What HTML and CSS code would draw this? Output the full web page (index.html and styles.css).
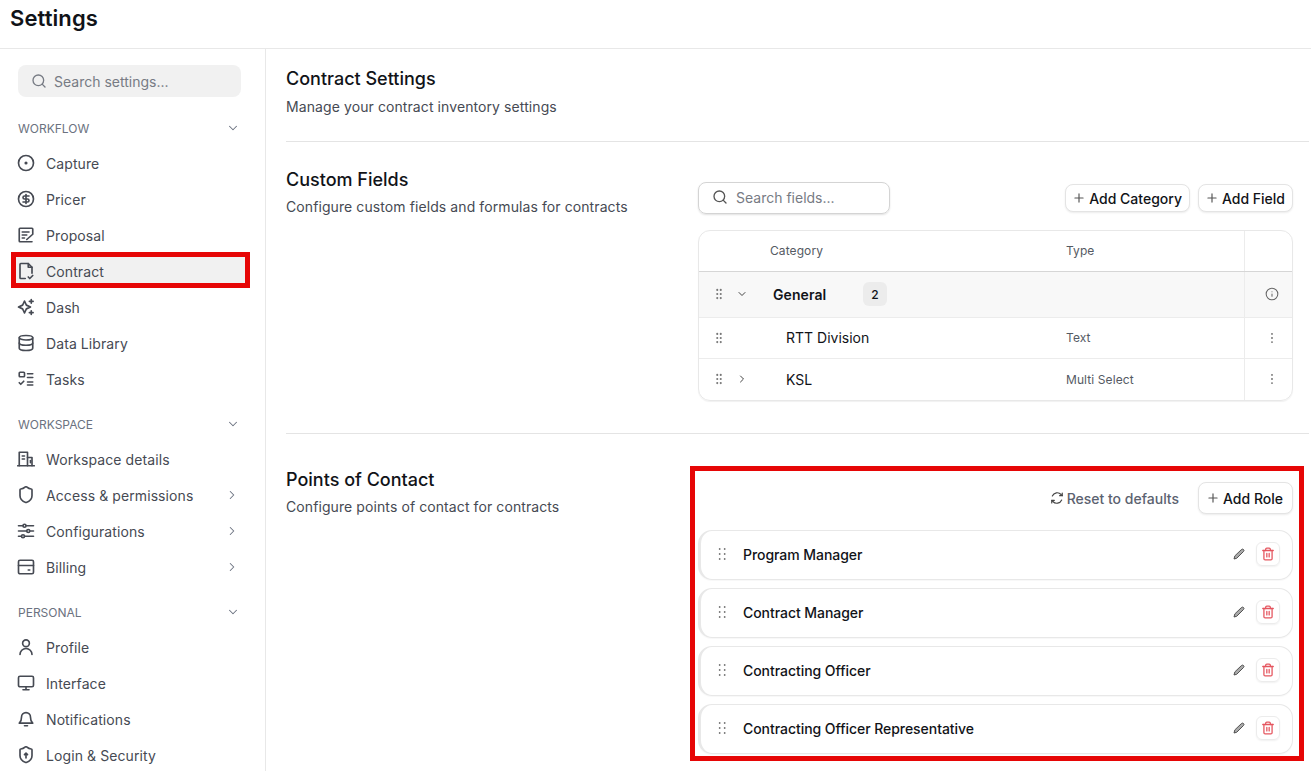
FILE: index.html
```html
<!DOCTYPE html>
<html lang="en">
<head>
  <meta charset="UTF-8">
  <meta name="viewport" content="width=device-width, initial-scale=1.0">
  <title>Settings</title>
  <link rel="stylesheet" href="styles.css">
</head>
<body>
  <svg class="sprite" aria-hidden="true">
    <symbol id="i-search" viewBox="0 0 24 24"><circle cx="11" cy="11" r="8"/><path d="m21 21-4.3-4.3"/></symbol>
    <symbol id="i-down" viewBox="0 0 24 24"><path d="m6 9 6 6 6-6"/></symbol>
    <symbol id="i-right" viewBox="0 0 24 24"><path d="m9 6 6 6-6 6"/></symbol>
    <symbol id="i-plus" viewBox="0 0 24 24"><path d="M5 12h14M12 5v14"/></symbol>
    <symbol id="i-grip" viewBox="0 0 24 24"><circle cx="9" cy="5" r=".8"/><circle cx="15" cy="5" r=".8"/><circle cx="9" cy="12" r=".8"/><circle cx="15" cy="12" r=".8"/><circle cx="9" cy="19" r=".8"/><circle cx="15" cy="19" r=".8"/></symbol>
    <symbol id="i-grip-wide" viewBox="0 0 16 16"><circle cx="5.500" cy="3" r=".4"/><circle cx="10.500" cy="3" r=".4"/><circle cx="5.500" cy="8" r=".4"/><circle cx="10.500" cy="8" r=".4"/><circle cx="5.500" cy="13" r=".4"/><circle cx="10.500" cy="13" r=".4"/></symbol>
    <symbol id="i-dots" viewBox="0 0 24 24"><circle cx="12" cy="5" r=".6"/><circle cx="12" cy="12" r=".6"/><circle cx="12" cy="19" r=".6"/></symbol>
    <symbol id="i-pencil" viewBox="0 0 24 24"><path d="M17 3a2.800 2.800 0 0 1 4 4L7.500 20.500 2 22l1.500-5.500z"/></symbol>
    <symbol id="i-trash" viewBox="0 0 24 24"><path d="M3 6h18"/><path d="M19 6v14a2 2 0 0 1-2 2H7a2 2 0 0 1-2-2V6"/><path d="M8 6V4a2 2 0 0 1 2-2h4a2 2 0 0 1 2 2v2"/><path d="M10 11v6M14 11v6"/></symbol>
  </svg>

  <header class="topbar"><h1>Settings</h1></header>

  <div class="layout">
    <aside class="sidebar">
      <div class="side-search">
        <svg class="icon-16"><use href="#i-search"/></svg>
        <span>Search settings...</span>
      </div>

      <div class="nav-head"><span>WORKFLOW</span><svg class="chev"><use href="#i-down"/></svg></div>
      <a class="nav-item"><svg class="nav-icon" viewBox="0 0 24 24"><circle cx="12" cy="12" r="10"/><circle cx="12" cy="12" r="1"/></svg>Capture</a>
      <a class="nav-item"><svg class="nav-icon" viewBox="0 0 24 24"><circle cx="12" cy="12" r="10"/><path d="M16 8h-6a2 2 0 1 0 0 4h4a2 2 0 1 1 0 4H8"/><path d="M12 18V6"/></svg>Pricer</a>
      <a class="nav-item"><svg class="nav-icon" viewBox="0 0 24 24"><path d="M21 10V4a1 1 0 0 0-1-1H4a1 1 0 0 0-1 1v16a1 1 0 0 0 1 1h16"/><path d="M7 8h9M7 12h6M7 16h3"/><path d="m13 18 8-7"/></svg>Proposal</a>
      <a class="nav-item active"><svg class="nav-icon" viewBox="0 0 24 24"><path d="M11 22H5a1 1 0 0 1-1-1V3a1 1 0 0 1 1-1h10l5 5v8"/><path d="M15 2v5h5"/><path d="m15 20 2 2 4-4"/></svg>Contract<span class="mark mark-nav"></span></a>
      <a class="nav-item"><svg class="nav-icon" viewBox="0 0 24 24"><path d="M10 6.500 12.500 12 18 14.500 12.500 17 10 22.500 7.500 17 2 14.500 7.500 12z" transform="translate(0 -2.500)"/><path d="M19 2v5M16.500 4.500h5M19 17v5M16.500 19.500h5"/></svg>Dash</a>
      <a class="nav-item"><svg class="nav-icon" viewBox="0 0 24 24"><ellipse cx="12" cy="5" rx="9" ry="3"/><path d="M3 5v14a9 3 0 0 0 18 0V5"/><path d="M3 12a9 3 0 0 0 18 0"/></svg>Data Library</a>
      <a class="nav-item"><svg class="nav-icon" viewBox="0 0 24 24"><rect x="3" y="3" width="7" height="6" rx="1"/><path d="m3 17 2 2 4-4"/><path d="M14 5h7M14 10h7M14 16h7M14 20h7"/></svg>Tasks</a>

      <div class="nav-head"><span>WORKSPACE</span><svg class="chev"><use href="#i-down"/></svg></div>
      <a class="nav-item"><svg class="nav-icon" viewBox="0 0 24 24"><path d="M1 21h22"/><path d="M3 21V3h11v18"/><path d="M14 10h6v11"/><path d="M7 8h3M7 12h3"/><path d="M18 14v3"/></svg>Workspace details</a>
      <a class="nav-item"><svg class="nav-icon" viewBox="0 0 24 24"><path d="M20 13c0 5-3.500 7.500-7.700 9a1 1 0 0 1-.6 0C7.500 20.500 4 18 4 13V5a1 1 0 0 1 1-1c2 0 4.500-1.200 6.200-2.700a1.200 1.200 0 0 1 1.600 0C14.500 2.800 17 4 19 4a1 1 0 0 1 1 1z"/></svg>Access &amp; permissions<svg class="chev end"><use href="#i-right"/></svg></a>
      <a class="nav-item"><svg class="nav-icon" viewBox="0 0 24 24"><path d="M2 5h6M12 5h10M2 12h11M17 12h5M2 19h4M10 19h12"/><circle cx="10" cy="5" r="2"/><circle cx="15" cy="12" r="2"/><circle cx="8" cy="19" r="2"/></svg>Configurations<svg class="chev end"><use href="#i-right"/></svg></a>
      <a class="nav-item"><svg class="nav-icon" viewBox="0 0 24 24"><rect x="2" y="3" width="20" height="18" rx="2"/><path d="M2 10h20"/><path d="M15 16h2"/></svg>Billing<svg class="chev end"><use href="#i-right"/></svg></a>

      <div class="nav-head"><span>PERSONAL</span><svg class="chev"><use href="#i-down"/></svg></div>
      <a class="nav-item"><svg class="nav-icon" viewBox="0 0 24 24"><circle cx="12" cy="7" r="4.500"/><path d="M4 22a8 8 0 0 1 16 0"/></svg>Profile</a>
      <a class="nav-item"><svg class="nav-icon" viewBox="0 0 24 24"><rect x="2" y="3" width="20" height="14" rx="2"/><path d="M8 21h8M12 17v4"/></svg>Interface</a>
      <a class="nav-item"><svg class="nav-icon" viewBox="0 0 24 24"><path d="M10 21h4"/><path d="M3 17.500c1.500-1.500 3-2.500 3-8a6 6 0 0 1 12 0c0 5.500 1.500 6.500 3 8z"/></svg>Notifications</a>
      <a class="nav-item"><svg class="nav-icon" viewBox="0 0 24 24"><path d="M20 13c0 5-3.500 7.500-7.700 9a1 1 0 0 1-.6 0C7.500 20.500 4 18 4 13V5a1 1 0 0 1 1-1c2 0 4.500-1.200 6.200-2.700a1.200 1.200 0 0 1 1.600 0C14.500 2.800 17 4 19 4a1 1 0 0 1 1 1z"/><path d="M12 16v-6M10 11.500l2-2 2 2"/></svg>Login &amp; Security</a>
    </aside>

    <main class="content">
      <section class="intro">
        <h2>Contract Settings</h2>
        <p>Manage your contract inventory settings</p>
      </section>

      <section class="block block-fields">
        <div class="block-text">
          <h2>Custom Fields</h2>
          <p>Configure custom fields and formulas for contracts</p>
        </div>
        <div class="block-body">
          <div class="toolbar">
            <div class="field-search">
              <svg class="icon-16"><use href="#i-search"/></svg>
              <span>Search fields...</span>
            </div>
            <div class="toolbar-actions">
              <button class="btn"><svg class="icon-14"><use href="#i-plus"/></svg>Add Category</button>
              <button class="btn"><svg class="icon-14"><use href="#i-plus"/></svg>Add Field</button>
            </div>
          </div>

          <div class="table">
            <div class="tr th">
              <div class="td-handle"></div>
              <div class="td-name">Category</div>
              <div class="td-type">Type</div>
              <div class="td-end"></div>
            </div>
            <div class="tr group">
              <div class="td-handle"><svg class="grip"><use href="#i-grip"/></svg><svg class="tiny"><use href="#i-down"/></svg></div>
              <div class="td-name"><b>General</b><span class="count">2</span></div>
              <div class="td-type"></div>
              <div class="td-end"><svg class="icon-14" viewBox="0 0 24 24"><circle cx="12" cy="12" r="10"/><path d="M12 16v-4M12 8h.01"/></svg></div>
            </div>
            <div class="tr field">
              <div class="td-handle"><svg class="grip"><use href="#i-grip"/></svg></div>
              <div class="td-name indent">RTT Division</div>
              <div class="td-type">Text</div>
              <div class="td-end"><svg class="dots"><use href="#i-dots"/></svg></div>
            </div>
            <div class="tr field">
              <div class="td-handle"><svg class="grip"><use href="#i-grip"/></svg><svg class="tiny"><use href="#i-right"/></svg></div>
              <div class="td-name indent">KSL</div>
              <div class="td-type">Multi Select</div>
              <div class="td-end"><svg class="dots"><use href="#i-dots"/></svg></div>
            </div>
          </div>
        </div>
      </section>

      <section class="block block-contacts">
        <div class="block-text">
          <h2>Points of Contact</h2>
          <p>Configure points of contact for contracts</p>
        </div>
        <div class="block-body contacts">
          <span class="mark mark-panel"></span>
          <div class="contacts-actions">
            <a class="reset"><svg class="icon-14" viewBox="0 0 24 24"><path d="M4 8.500A9 9 0 0 1 19 6l2 2"/><path d="M21 3.500V8h-4.500"/><path d="M20 15.500A9 9 0 0 1 5 18l-2-2"/><path d="M3 20.500V16h4.500"/></svg>Reset to defaults</a>
            <button class="btn btn-role"><svg class="icon-14"><use href="#i-plus"/></svg>Add Role</button>
          </div>
          <div class="role"><svg class="grip-wide"><use href="#i-grip-wide"/></svg><span class="role-name">Program Manager</span><svg class="pencil"><use href="#i-pencil"/></svg><span class="trash"><svg><use href="#i-trash"/></svg></span></div>
          <div class="role"><svg class="grip-wide"><use href="#i-grip-wide"/></svg><span class="role-name">Contract Manager</span><svg class="pencil"><use href="#i-pencil"/></svg><span class="trash"><svg><use href="#i-trash"/></svg></span></div>
          <div class="role"><svg class="grip-wide"><use href="#i-grip-wide"/></svg><span class="role-name">Contracting Officer</span><svg class="pencil"><use href="#i-pencil"/></svg><span class="trash"><svg><use href="#i-trash"/></svg></span></div>
          <div class="role"><svg class="grip-wide"><use href="#i-grip-wide"/></svg><span class="role-name">Contracting Officer Representative</span><svg class="pencil"><use href="#i-pencil"/></svg><span class="trash"><svg><use href="#i-trash"/></svg></span></div>
        </div>
      </section>
    </main>
  </div>
</body>
</html>
```

FILE: styles.css
```css
* {
  box-sizing: border-box;
}

html,
body {
  height: 100%;
}

body {
  margin: 0;
  font-family: Inter, "Noto Sans", sans-serif;
  font-size: 14px;
  letter-spacing: 0.09px;
  color: #111318;
  background: #fff;
  overflow: hidden;
}

.sprite {
  display: none;
}

svg {
  fill: none;
  stroke: currentColor;
  stroke-width: 2;
  stroke-linecap: round;
  stroke-linejoin: round;
  flex-shrink: 0;
}

h1,
h2,
p {
  margin: 0;
}

.icon-16 {
  width: 16px;
  height: 16px;
}

.icon-14 {
  width: 14px;
  height: 14px;
}

.topbar {
  height: 49px;
  padding: 5px 10px 0;
  border-bottom: 1px solid #e8e8e8;
}

.topbar h1 {
  font-size: 22px;
  line-height: 27px;
  font-weight: 600;
}

.layout {
  display: flex;
  height: 722px;
}

/* sidebar */
.sidebar {
  width: 266px;
  flex-shrink: 0;
  padding: 16px 16px 0 16px;
  border-right: 1px solid #e8e8e8;
  color: #464a53;
}

.side-search {
  display: flex;
  align-items: center;
  gap: 7px;
  height: 32px;
  margin: 0 8px 0 2px;
  padding: 0 13px;
  border-radius: 8px;
  background: #f1f1f1;
  color: #777b84;
  letter-spacing: 0;
}

.nav-head {
  display: flex;
  justify-content: space-between;
  align-items: center;
  height: 16px;
  margin: 23px 8px 9px 2px;
  font-size: 12px;
  letter-spacing: 0;
  color: #6b7280;
}

.nav-item ~ .nav-head {
  margin-top: 19px;
}

.chev {
  width: 14px;
  height: 14px;
  margin: -1px 1px 0 0;
  color: #6b7280;
  stroke-width: 1.800;
}

.chev.end {
  margin: 0 1px 0 auto;
}

.nav-item {
  position: relative;
  isolation: isolate;
  display: flex;
  align-items: center;
  gap: 11px;
  width: 229px;
  height: 36px;
  padding-left: 1px;
  padding-right: 5px;
}

.nav-item.active::before {
  content: "";
  position: absolute;
  z-index: -1;
  left: 0;
  right: 0;
  top: 4px;
  bottom: 6px;
  background: #f1f1f1;
}

.nav-icon {
  width: 18px;
  height: 18px;
  stroke-width: 2.200;
}

/* red annotation frames drawn over the page */
.mark {
  position: absolute;
  border: 5px solid #e60606;
  pointer-events: none;
}

.mark-nav {
  left: -5px;
  right: -5px;
  top: -1px;
  bottom: 1px;
}

.mark-panel {
  left: -8px;
  right: -11px;
  top: -2px;
  bottom: 1px;
}

/* main column */
.content {
  flex: 1;
  padding: 0 2px 0 20px;
}

.content h2 {
  font-size: 18px;
  line-height: 24px;
  font-weight: 500;
  letter-spacing: 0;
}

.content p {
  margin-top: 3px;
  line-height: 24px;
  color: #464a53;
}

.intro {
  height: 93px;
  padding-top: 18px;
  border-bottom: 1px solid #e4e4e4;
}

.intro p {
  margin-top: 4px;
}

.block {
  display: grid;
  grid-template-columns: 388px 1fr;
  column-gap: 24px;
  padding-right: 16px;
}

.block-fields {
  height: 292px;
  padding-top: 26px;
  border-bottom: 1px solid #e4e4e4;
}

.block-contacts {
  padding-top: 34px;
}

.toolbar {
  display: flex;
  justify-content: space-between;
  align-items: center;
  margin-top: 14px;
  height: 32px;
}

.field-search {
  display: flex;
  align-items: center;
  gap: 8px;
  width: 192px;
  height: 32px;
  padding: 0 13px 2px;
  border: 1px solid #d4d4d4;
  border-radius: 8px;
  box-shadow: 0 1px 2px rgba(0, 0, 0, 0.12);
  color: #777b84;
  letter-spacing: 0;
}

.field-search svg {
  color: #555;
}

.toolbar-actions {
  display: flex;
  gap: 8px;
}

.btn {
  display: flex;
  align-items: center;
  gap: 3px;
  height: 28px;
  padding: 0 7px 0 6px;
  border: 1px solid #e4e4e4;
  border-radius: 8px;
  background: #fff;
  box-shadow: 0 1px 2px rgba(0, 0, 0, 0.08);
  font: 500 14px Inter, sans-serif;
  color: #111318;
}

.btn svg {
  color: #555;
}

.table {
  margin-top: 16px;
  border: 1px solid #e8e8e8;
  border-radius: 12px;
  box-shadow: 0 1px 1px rgba(0, 0, 0, 0.06);
  overflow: hidden;
}

.tr {
  display: grid;
  grid-template-columns: 63px 1fr 179px 48px;
  align-items: stretch;
  border-bottom: 1px solid #ececec;
}

.tr:last-child {
  border-bottom: none;
}

.tr > div {
  display: flex;
  align-items: center;
  padding-bottom: 1px;
}

.th {
  height: 41px;
  border-bottom: 1px solid #d6d6d6;
  font-size: 12px;
  color: #555a63;
}

.th > div {
  padding-bottom: 2px;
}

.th .td-name {
  padding-left: 8px;
}

.group {
  height: 46px;
  background: #f8f8f8;
}

.field {
  height: 41px;
}

.td-handle {
  padding-left: 13px;
  gap: 10px;
  color: #777;
}

.td-name b {
  width: 101px;
  padding-left: 11px;
  font-weight: 600;
}

.td-name.indent {
  padding-left: 24px;
  letter-spacing: 0;
}

.td-type {
  padding-left: 1px;
  font-size: 12px;
  color: #555a63;
}

.td-end {
  justify-content: center;
  padding-left: 6px;
  border-left: 1px solid #ececec;
  color: #666;
}

.td-end .icon-14 {
  stroke-width: 1.800;
}

.count {
  display: flex;
  align-items: center;
  justify-content: center;
  width: 24px;
  height: 24px;
  border-radius: 6px;
  background: #ececec;
  font-size: 12px;
  font-weight: 500;
}

.grip {
  width: 14px;
  height: 14px;
  color: #777;
}

.grip-wide {
  width: 16px;
  height: 16px;
  color: #666;
  stroke-width: 1;
}

.tiny {
  width: 12px;
  height: 12px;
  color: #444;
  stroke-width: 2;
}

.dots {
  width: 14px;
  height: 14px;
}

/* points of contact */
.contacts {
  position: relative;
}

.contacts-actions {
  display: flex;
  justify-content: flex-end;
  align-items: center;
  gap: 19px;
  height: 32px;
  margin-top: 14px;
  margin-bottom: 16px;
}

.reset {
  display: flex;
  align-items: center;
  gap: 3px;
  color: #5b6270;
  font-weight: 500;
  letter-spacing: 0;
}

.reset svg {
  color: #444;
}

.btn-role {
  height: 32px;
  padding: 0 9px 0 7px;
}

.role {
  display: flex;
  align-items: center;
  height: 50px;
  margin: 0 0 8px 0;
  padding: 0 12px 2px 13px;
  border: 1px solid #e8e8e8;
  border-left-width: 3px;
  border-radius: 14px;
  box-shadow: 0 1px 1px rgba(0, 0, 0, 0.03);
}

.role-name {
  flex: 1;
  margin-left: 13px;
  font-weight: 500;
  letter-spacing: -0.05px;
}

.pencil {
  width: 12px;
  height: 12px;
  margin-right: 1px;
  color: #444;
  fill: #aaa;
  stroke-width: 1.800;
}

.trash {
  display: flex;
  align-items: center;
  justify-content: center;
  width: 24px;
  height: 24px;
  margin-left: 10px;
  border: 1px solid #ececec;
  border-radius: 6px;
  box-shadow: 0 1px 2px rgba(0, 0, 0, 0.06);
  color: #e5565f;
}

.trash svg {
  width: 14px;
  height: 14px;
  stroke-width: 2.200;
}
```
